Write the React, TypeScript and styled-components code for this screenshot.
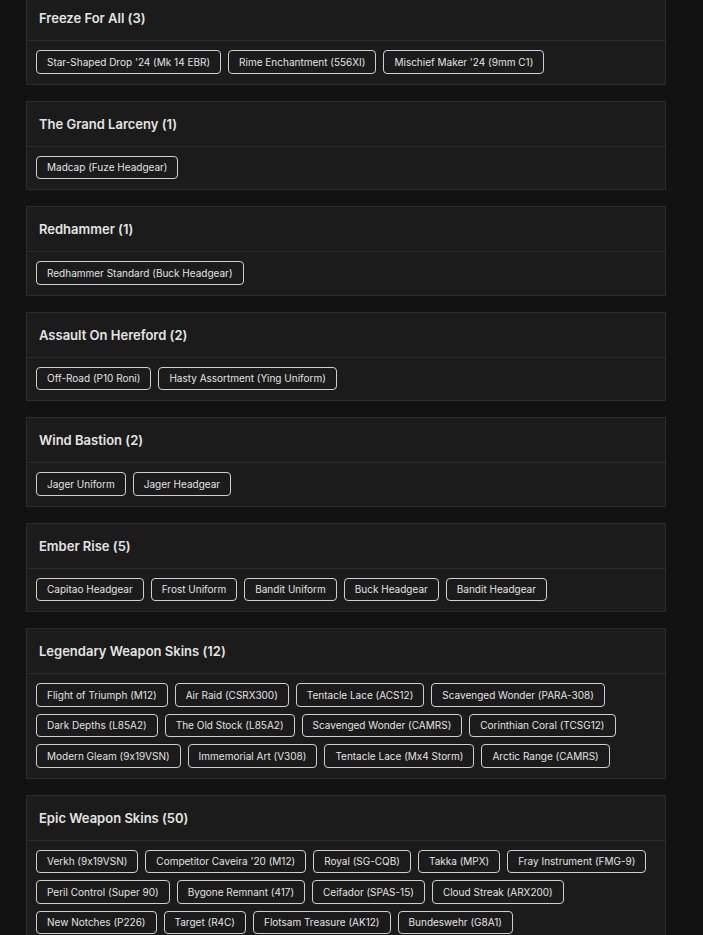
import React from "react";
import styled, { createGlobalStyle } from "styled-components";

const GlobalStyle = createGlobalStyle`
  html, body {
    margin: 0;
    padding: 0;
    background: #121212;
  }
  body {
    font-family: Inter, "Noto Sans", "Liberation Sans", sans-serif;
    font-feature-settings: "calt" 0;
    color: #e2e2e2;
  }
`;

const Page = styled.div`
  width: 640px;
  margin: -5px 0 0 26px;
  display: flex;
  flex-direction: column;
  gap: 16px;
`;

const Card = styled.section`
  background: #1b1b1b;
  border: 1px solid #2c2c2c;
`;

const Header = styled.div`
  height: 44px;
  display: flex;
  align-items: center;
  padding: 0 12px;
  border-bottom: 1px solid #2c2c2c;
`;

const Title = styled.h2`
  margin: 0;
  font-size: 13px;
  font-weight: 600;
  color: #e4e4e4;
  letter-spacing: 0;
`;

const Body = styled.div`
  padding: 9px 9px 10px;
  display: flex;
  flex-wrap: wrap;
  gap: 7px 7px;
`;

const Chip = styled.button`
  height: 23.5px;
  padding: 0 10px;
  border: 1px solid #cfcfcf;
  border-radius: 4px;
  background: #1b1b1b;
  color: #e2e2e2;
  font-family: inherit;
  font-feature-settings: "calt" 0;
  font-size: 10px;
  font-weight: 400;
  line-height: 1;
  white-space: nowrap;
  cursor: pointer;
`;

const sections: { title: string; items: string[] }[] = [
  {
    title: "Freeze For All (3)",
    items: [
      "Star-Shaped Drop '24 (Mk 14 EBR)",
      "Rime Enchantment (556XI)",
      "Mischief Maker '24 (9mm C1)",
    ],
  },
  { title: "The Grand Larceny (1)", items: ["Madcap (Fuze Headgear)"] },
  { title: "Redhammer (1)", items: ["Redhammer Standard (Buck Headgear)"] },
  {
    title: "Assault On Hereford (2)",
    items: ["Off-Road (P10 Roni)", "Hasty Assortment (Ying Uniform)"],
  },
  { title: "Wind Bastion (2)", items: ["Jager Uniform", "Jager Headgear"] },
  {
    title: "Ember Rise (5)",
    items: [
      "Capitao Headgear",
      "Frost Uniform",
      "Bandit Uniform",
      "Buck Headgear",
      "Bandit Headgear",
    ],
  },
  {
    title: "Legendary Weapon Skins (12)",
    items: [
      "Flight of Triumph (M12)",
      "Air Raid (CSRX300)",
      "Tentacle Lace (ACS12)",
      "Scavenged Wonder (PARA-308)",
      "Dark Depths (L85A2)",
      "The Old Stock (L85A2)",
      "Scavenged Wonder (CAMRS)",
      "Corinthian Coral (TCSG12)",
      "Modern Gleam (9x19VSN)",
      "Immemorial Art (V308)",
      "Tentacle Lace (Mx4 Storm)",
      "Arctic Range (CAMRS)",
    ],
  },
  {
    title: "Epic Weapon Skins (50)",
    items: [
      "Verkh (9x19VSN)",
      "Competitor Caveira '20 (M12)",
      "Royal (SG-CQB)",
      "Takka (MPX)",
      "Fray Instrument (FMG-9)",
      "Peril Control (Super 90)",
      "Bygone Remnant (417)",
      "Ceifador (SPAS-15)",
      "Cloud Streak (ARX200)",
      "New Notches (P226)",
      "Target (R4C)",
      "Flotsam Treasure (AK12)",
      "Bundeswehr (G8A1)",
    ],
  },
];

export default function App() {
  return (
    <>
      <GlobalStyle />
      <Page>
        {sections.map((s) => (
          <Card key={s.title}>
            <Header>
              <Title>{s.title}</Title>
            </Header>
            <Body>
              {s.items.map((it) => (
                <Chip key={it}>{it}</Chip>
              ))}
            </Body>
          </Card>
        ))}
      </Page>
    </>
  );
}
